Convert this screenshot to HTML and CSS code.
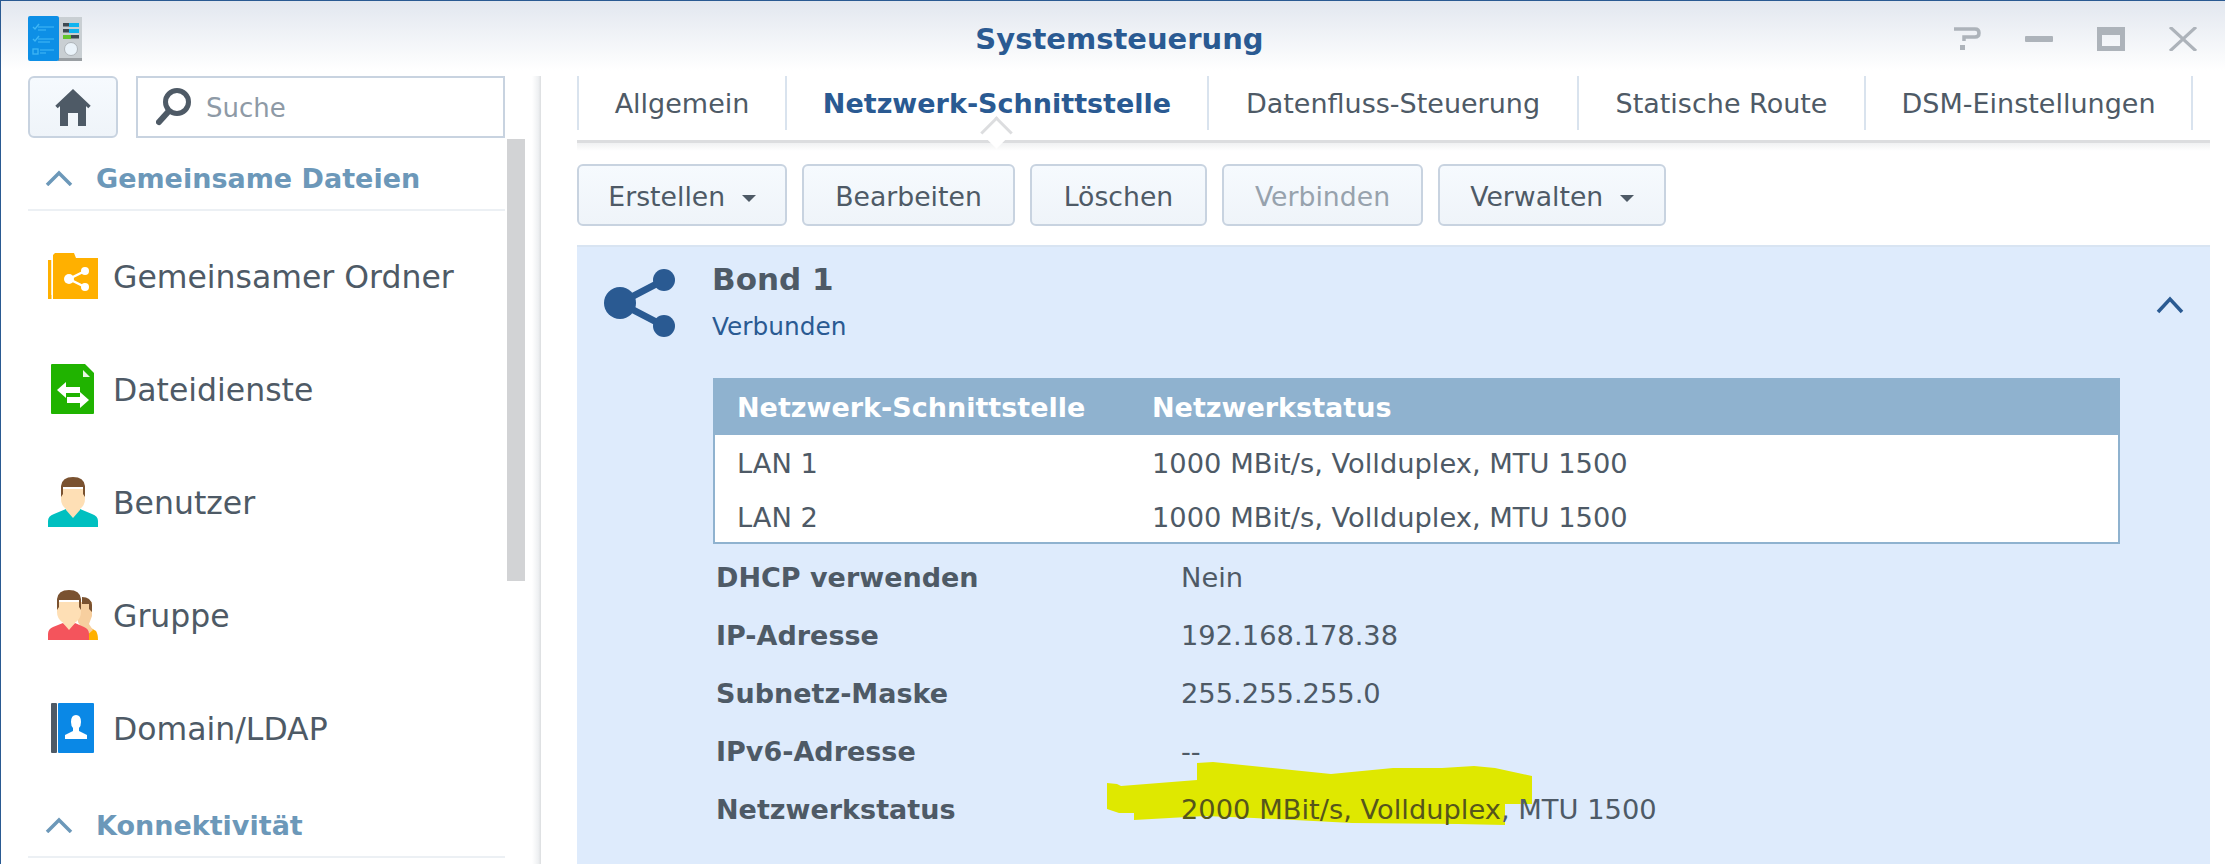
FILE: index.html
```html
<!DOCTYPE html>
<html>
<head>
    <title>Systemsteuerung</title>
    <link rel="stylesheet" href="styles.css">
</head>
<body>
    <div class="window">
        <header class="titlebar">
            <svg class="app-icon" width="54" height="46" viewBox="0 0 54 46">
                <rect x="30" y="1" width="24" height="44" fill="#c9cfd3"/>
                <rect x="30" y="42" width="24" height="3" fill="#9a9fa3"/>
                <rect x="0" y="0" width="31" height="45" rx="2" fill="#0d8fe6"/>
                <path d="M5 11l2 2 4-5M5 23l2 2 4-5" fill="none" stroke="#3fb6f5" stroke-width="1.4"/>
                <rect x="5" y="33" width="5" height="5" fill="none" stroke="#3fb6f5" stroke-width="1.3"/>
                <path d="M10 11h16M10 14h8M10 23h16M10 26h12M12 34h14M12 37h6" stroke="#45baf6" stroke-width="1.2"/>
                <rect x="35" y="7" width="14" height="3.5" fill="#3e4a52"/>
                <rect x="41" y="7" width="10" height="4" fill="#10b4f0"/>
                <rect x="35" y="13" width="14" height="3.5" fill="#3e4a52"/>
                <rect x="41" y="13" width="10" height="4" fill="#10b4f0"/>
                <rect x="35" y="19" width="16" height="3.5" fill="#3e4a52"/>
                <rect x="35" y="19" width="8" height="4" fill="#63c52c"/>
                <circle cx="43" cy="33" r="6.5" fill="#eaf3fa" stroke="#aeb4b9"/>
            </svg>
            <h1 class="title">Systemsteuerung</h1>
            <div class="win-controls">
                <svg width="28" height="24" viewBox="0 0 28 24"><path d="M1 2h21q4 0 4 4t-4 4H11v4" fill="none" stroke="#adb3ba" stroke-width="3.5"/><rect x="7" y="18" width="5" height="5" fill="#adb3ba"/></svg>
                <svg width="28" height="24" viewBox="0 0 28 24"><rect x="0" y="9" width="28" height="6" rx="1" fill="#adb3ba"/></svg>
                <svg width="28" height="24" viewBox="0 0 28 24"><path fill-rule="evenodd" d="M0 0h28v24H0zM5 8v11h18V8z" fill="#adb3ba"/></svg>
                <svg width="28" height="24" viewBox="0 0 28 24"><path d="M1 0l26 24M27 0L1 24" stroke="#adb3ba" stroke-width="3.2"/></svg>
            </div>
        </header>

        <div class="main">
            <aside class="sidebar">
                <div class="side-top">
                    <button class="home-btn">
                        <svg width="36" height="38" viewBox="0 0 36 38"><path fill-rule="evenodd" d="M5 17L18 5l13 12v21H5zM13 25v13h10V25z" fill="#4e5a66"/><path d="M1.500 19L18 3.500 34.500 19" fill="none" stroke="#4e5a66" stroke-width="3.500"/></svg>
                    </button>
                    <div class="search">
                        <svg width="36" height="40" viewBox="0 0 36 40"><circle cx="21" cy="15" r="11.500" fill="none" stroke="#4e5a66" stroke-width="5"/><path d="M12 25L3 35" stroke="#4e5a66" stroke-width="6" stroke-linecap="round"/></svg>
                        <span>Suche</span>
                    </div>
                </div>
                <div class="side-body">
                    <nav class="side-list">
                        <div class="side-group">
                            <svg width="28" height="16" viewBox="0 0 28 16"><path d="M2 15L14 3l12 12" fill="none" stroke="#6c98b9" stroke-width="3.500"/></svg>
                            <span>Gemeinsame Dateien</span>
                        </div>
                        <ul class="side-items">
                            <li class="side-item">
                                <svg width="50" height="46" viewBox="0 0 50 46">
                                    <path d="M7 0h19l2 5h22v41H5V2z" fill="#ffb000"/>
                                    <path d="M0 7h3.500v39H0z" fill="#ffb000"/>
                                    <path d="M3.500 7h1.500v35H3.500z" fill="#fff"/>
                                    <path d="M37 18L21 26l16 8" fill="none" stroke="#fff" stroke-width="2.500"/>
                                    <circle cx="37" cy="18" r="4" fill="#fff"/><circle cx="21" cy="26" r="5" fill="#fff"/><circle cx="37" cy="34" r="4" fill="#fff"/>
                                </svg>
                                <span>Gemeinsamer Ordner</span>
                            </li>
                            <li class="side-item">
                                <svg width="50" height="50" viewBox="0 0 50 50">
                                    <path d="M3 1q0-1 1-1h33l9 9v40q0 1-1 1H4q-1 0-1-1z" fill="#20b300"/>
                                    <path d="M35 6l7 7h-7z" fill="#e9f7e4"/>
                                    <path d="M9 26l9-8v5h14v6H18v5zM41 36l-9 8v-5H19v-6h13v-5z" fill="#fff"/>
                                </svg>
                                <span>Dateidienste</span>
                            </li>
                            <li class="side-item">
                                <svg width="50" height="50" viewBox="0 0 50 50">
                                    <path d="M0 50v-6q0-5 6-7l12-5 7 6 7-6 12 5q6 2 6 7v6z" fill="#00c0c0"/>
                                    <path d="M18 29h14v4l-7 8-7-8z" fill="#fedfb5"/>
                                    <path d="M13 12h24v10q0 6-5 10l-7 3-7-3q-5-4-5-10z" fill="#fedfb5"/>
                                    <path d="M13 20V9q1-9 12-9t12 9v11l-2-3V10H15v7z" fill="#7a5230"/>
                                </svg>
                                <span>Benutzer</span>
                            </li>
                            <li class="side-item">
                                <svg width="50" height="50" viewBox="0 0 50 50">
                                    <path d="M38 50v-9l5-3 5 3q2 3 2 9z" fill="#ffb000"/>
                                    <path d="M30 12h14v14l-3 8 4 6-7 6-8-14z" fill="#f7cf9f"/>
                                    <path d="M34 7q9 0 10 8v7l-3-3v-5h-7z" fill="#7a5230"/>
                                    <path d="M0 50v-6q0-5 5-7l10-4 6 5 6-5 9 4q5 2 5 7v6z" fill="#f4545c"/>
                                    <path d="M15 29h12v4l-6 7-6-7z" fill="#fedfb5"/>
                                    <path d="M9 12h24v10q0 6-5 10l-7 3-7-3q-5-4-5-10z" fill="#fedfb5"/>
                                    <path d="M9 20V9q1-9 12-9t12 9v11l-2-3V10H11v7z" fill="#7a5230"/>
                                </svg>
                                <span>Gruppe</span>
                            </li>
                            <li class="side-item">
                                <svg width="50" height="50" viewBox="0 0 50 50">
                                    <rect x="3" y="0" width="6" height="50" rx="1" fill="#4e5a66"/>
                                    <rect x="10" y="0" width="36" height="50" rx="1" fill="#0a88e6"/>
                                    <path d="M23 19q0-7 5-7t5 7q0 4-2 6v3l8 4v4H17v-4l8-4v-3q-2-2-2-6z" fill="#fff"/>
                                </svg>
                                <span>Domain/LDAP</span>
                            </li>
                        </ul>
                        <div class="side-group">
                            <svg width="28" height="16" viewBox="0 0 28 16"><path d="M2 15L14 3l12 12" fill="none" stroke="#6c98b9" stroke-width="3.500"/></svg>
                            <span>Konnektivität</span>
                        </div>
                    </nav>
                    <div class="side-scroll"></div>
                </div>
            </aside>

            <section class="content">
                <div class="tabs">
                    <div class="tab">Allgemein</div>
                    <div class="tab active">Netzwerk-Schnittstelle</div>
                    <div class="tab">Datenfluss-Steuerung</div>
                    <div class="tab">Statische Route</div>
                    <div class="tab">DSM-Einstellungen</div>
                </div>

                <div class="toolbar">
                    <button class="btn">Erstellen <i class="caret"></i></button>
                    <button class="btn">Bearbeiten</button>
                    <button class="btn">Löschen</button>
                    <button class="btn disabled">Verbinden</button>
                    <button class="btn">Verwalten <i class="caret"></i></button>
                </div>

                <div class="panel">
                    <div class="panel-head">
                        <svg class="bond-icon" width="72" height="68" viewBox="0 0 72 68">
                            <path d="M60 11L16 34l44 23" fill="none" stroke="#2a5a92" stroke-width="7"/>
                            <circle cx="60" cy="11" r="11" fill="#2a5a92"/>
                            <circle cx="16" cy="34" r="16" fill="#2a5a92"/>
                            <circle cx="60" cy="57" r="11" fill="#2a5a92"/>
                        </svg>
                        <div class="bond-text">
                            <div class="bond-name">Bond 1</div>
                            <div class="bond-status">Verbunden</div>
                        </div>
                        <svg class="collapse" width="28" height="18" viewBox="0 0 28 18"><path d="M2 16L14 3l12 13" fill="none" stroke="#2a5a92" stroke-width="3.500"/></svg>
                    </div>

                    <table class="ports">
                        <tr>
                            <th>Netzwerk-Schnittstelle</th>
                            <th>Netzwerkstatus</th>
                        </tr>
                        <tr>
                            <td>LAN 1</td>
                            <td>1000 MBit/s, Vollduplex, MTU 1500</td>
                        </tr>
                        <tr>
                            <td>LAN 2</td>
                            <td>1000 MBit/s, Vollduplex, MTU 1500</td>
                        </tr>
                    </table>

                    <dl class="details">
                        <dt>DHCP verwenden</dt><dd>Nein</dd>
                        <dt>IP-Adresse</dt><dd>192.168.178.38</dd>
                        <dt>Subnetz-Maske</dt><dd>255.255.255.0</dd>
                        <dt>IPv6-Adresse</dt><dd>--</dd>
                        <dt>Netzwerkstatus</dt>
                        <dd class="marked">
                            <svg class="marker" width="425" height="64" viewBox="0 0 425 64"><path d="M0 21l10 1 4 2 76-6V1l16-1 118 12 62-6h49l32-2 21 2 37 8v28h-27v21l-47-1-106-1-98-5-49-2-71 4v-7H12L0 47z" fill="#dfe800"/></svg>
                            <span class="mark-text">2000 MBit/s, Vollduplex</span><span class="mark-rest">, MTU 1500</span>
                        </dd>
                    </dl>
                </div>
            </section>
        </div>
    </div>
</body>
</html>
```
FILE: styles.css
```css
* {
    box-sizing: border-box;
}

html, body {
    margin: 0;
    height: 100%;
    overflow: hidden;
    background: #fff;
}

body {
    font-family: "DejaVu Sans", sans-serif;
    color: #4e5a66;
}

.window {
    width: 2225px;
    height: 864px;
    border-top: 1px solid #2a5a92;
    border-left: 1px solid #2a5a92;
    overflow: hidden;
}

.titlebar {
    height: 75px;
    padding: 0 28px 0 27px;
    display: grid;
    grid-template-columns: 1fr auto 1fr;
    align-items: center;
    background: linear-gradient(#e2e7ef, #ffffff 93%);
}

.title {
    margin: 0 0 0 14px;
    font-size: 29px;
    font-weight: bold;
    color: #2a5a92;
}

.win-controls {
    display: flex;
    justify-content: flex-end;
    gap: 44px;
}

.main {
    display: flex;
    height: 788px;
}

/* left column */
.sidebar {
    width: 540px;
    flex: none;
    background: linear-gradient(90deg, #fff, #eef0f2 70%, #dcdee0) right top / 9px 100% no-repeat;
}

.side-top {
    display: flex;
    gap: 18px;
    padding-left: 27px;
}

.home-btn {
    width: 90px;
    height: 62px;
    padding: 0;
    display: flex;
    align-items: center;
    justify-content: center;
    background: linear-gradient(#f6fafe, #eff4f9);
    border: 2px solid #c8d3e0;
    border-radius: 6px;
}

.search {
    width: 369px;
    height: 62px;
    padding-left: 18px;
    display: flex;
    align-items: center;
    gap: 14px;
    border: 2px solid #c8d3e0;
    font-size: 26px;
    color: #8e9aa6;
}

.search span {
    margin-top: 2px;
}

.side-body {
    display: flex;
    gap: 2px;
    padding-left: 27px;
    margin-top: 1px;
}

.side-list {
    width: 477px;
    flex: none;
}

.side-scroll {
    width: 18px;
    height: 442px;
    background: #d2d3d5;
}

.side-group {
    height: 72px;
    padding: 8px 0 0 17px;
    display: flex;
    align-items: center;
    gap: 23px;
    border-bottom: 2px solid #ecf0f4;
    font-size: 27px;
    font-weight: bold;
    color: #6c98b9;
}

.side-items {
    list-style: none;
    margin: 0;
    padding: 8px 0 2px;
}

.side-item {
    height: 113px;
    padding-left: 20px;
    display: flex;
    align-items: center;
    gap: 15px;
    font-size: 31.5px;
}

.side-item span {
    margin-top: 2px;
}

/* right column */
.content {
    width: 1633px;
    margin-left: 36px;
    flex: none;
}

.tabs {
    position: relative;
    height: 67px;
    display: grid;
    grid-template-columns: 208px 422px 370px 287px 329px 17px;
    align-items: start;
    border-bottom: 3px solid #dcdddf;
    font-size: 27px;
}

.tabs::after {
    content: "";
    position: absolute;
    left: 0;
    right: 0;
    top: 67px;
    height: 8px;
    background: linear-gradient(#f0f1f2, #fff);
}

.tab {
    height: 54px;
    line-height: 56px;
    text-align: center;
    border-left: 2px solid #d9e3ee;
    white-space: nowrap;
}

.tab:nth-child(5) {
    border-right: 2px solid #d9e3ee;
    width: 329px;
}

.tab.active {
    position: relative;
    font-weight: bold;
    color: #2a5a92;
}

/* little notch under the current tab */
.tab.active::after {
    content: "";
    position: absolute;
    z-index: 1;
    left: 198px;
    top: 45px;
    width: 20px;
    height: 20px;
    background: #fff;
    border-top: 3px solid #dcdddf;
    border-left: 3px solid #dcdddf;
    transform: rotate(45deg);
}

.toolbar {
    margin-top: 21px;
    display: grid;
    grid-template-columns: 210px 213px 177px 201px 228px;
    gap: 15px;
}

.btn {
    height: 62px;
    padding: 2px 0 0;
    background: linear-gradient(#f6fafe, #eff4f9);
    border: 2px solid #c8d3e0;
    border-radius: 6px;
    font-family: inherit;
    font-size: 26.7px;
    color: #4e5a66;
}

.btn.disabled {
    color: #97a2ad;
}

.caret {
    display: inline-block;
    margin-left: 8px;
    vertical-align: middle;
    border-top: 7px solid #4e5a66;
    border-left: 7px solid transparent;
    border-right: 7px solid transparent;
}

.panel {
    margin-top: 19px;
    height: 620px;
    background: #deebfc;
    border-top: 2px solid #d8e4f2;
}

.panel-head {
    height: 131px;
    padding: 22px 26px 0 27px;
    display: flex;
    align-items: flex-start;
}

.bond-icon {
    flex: none;
}

.bond-text {
    margin-left: 36px;
    flex: 1;
}

.bond-name {
    margin-top: -8px;
    font-size: 31px;
    font-weight: bold;
}

.bond-status {
    margin-top: 15px;
    font-size: 24.8px;
    color: #2a5a92;
}

.collapse {
    margin-top: 27px;
}

.ports {
    margin-left: 136px;
    width: 1407px;
    border-collapse: collapse;
    border: 2px solid #8fb2cf;
    background: #fff;
    font-size: 27.3px;
}

.ports th {
    height: 56px;
    padding: 0 0 0 22px;
    text-align: left;
    background: #8fb2cf;
    color: #fff;
    font-size: 27px;
}

.ports th:first-child {
    width: 416px;
}

.ports td {
    height: 54px;
    padding: 3px 0 0 22px;
}

.details {
    margin: 4px 0 0 139px;
    display: grid;
    grid-template-columns: 465px 1fr;
    grid-auto-rows: 58px;
    align-items: center;
    font-size: 27.3px;
}

.details dt {
    font-size: 27px;
    font-weight: bold;
}

.details dd {
    margin: 0;
    padding-top: 2px;
    line-height: 32px;
}

/* the yellow felt-pen stroke sits behind the row text */
.marked {
    position: relative;
    white-space: nowrap;
}

.marker {
    position: absolute;
    left: -74px;
    top: -30px;
}

.mark-text, .mark-rest {
    position: relative;
}

.mark-text {
    color: #55551c;
}
```
